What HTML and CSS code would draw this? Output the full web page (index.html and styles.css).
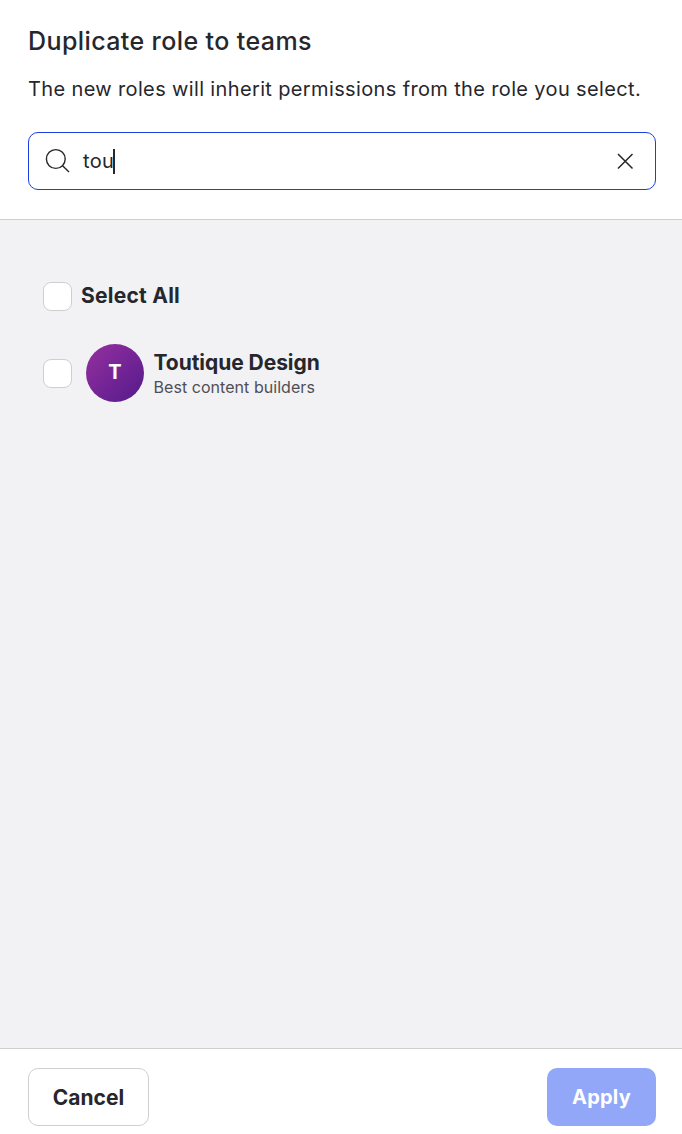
FILE: index.html
```html
<!DOCTYPE html>
<html lang="en">
<head>
<meta charset="utf-8">
<title>Duplicate role to teams</title>
<link rel="stylesheet" href="styles.css">
</head>
<body>
<div class="dialog">
  <header class="head">
    <h1 class="title">Duplicate role to teams</h1>
    <p class="desc">The new roles will inherit permissions from the role you select.</p>
    <div class="search">
      <svg class="icon-search" width="26" height="26" viewBox="0 0 26 26" fill="none" stroke="#26272c" stroke-width="1.4"><circle cx="10.8" cy="11" r="9.4"/><path d="M17.6 17.8 L24 24"/></svg>
      <span class="query">tou</span><span class="caret"></span>
      <svg class="icon-clear" width="18" height="18" viewBox="0 0 18 18" fill="none" stroke="#26272c" stroke-width="1.5"><path d="M2 2 L16.5 16.5 M16.5 2 L2 16.5"/></svg>
    </div>
  </header>
  <main class="list">
    <div class="row all">
      <span class="check"></span>
      <span class="all-label">Select All</span>
    </div>
    <div class="row team">
      <span class="check"></span>
      <span class="avatar">T</span>
      <div class="team-text">
        <div class="team-name">Toutique Design</div>
        <div class="team-sub">Best content builders</div>
      </div>
    </div>
  </main>
  <footer class="foot">
    <button class="btn cancel">Cancel</button>
    <button class="btn apply">Apply</button>
  </footer>
</div>
</body>
</html>
```
FILE: styles.css
```css
* { box-sizing: border-box; }
html, body { margin: 0; height: 100%; }
body { font-family: Inter, "Liberation Sans", sans-serif; color: #26272c; background: #fff; }
.dialog { display: flex; flex-direction: column; height: 1134px; }
.head { height: 220px; padding: 24px 26px 0 28px; border-bottom: 1px solid #cfcfd2; flex: none; }
.title { margin: 0; font-size: 25px; line-height: 34px; font-weight: 500; letter-spacing: 0.4px; }
.desc { margin: 16px 0 0; font-size: 20px; line-height: 30px; font-weight: 400; letter-spacing: 0.36px; white-space: nowrap; }
.search { margin-top: 28px; height: 58px; border: 1px solid #1a3ee0; border-radius: 10px; display: flex; align-items: center; padding: 0 21px 0 16px; }
.icon-search { flex: none; }
.query { margin-left: 12px; font-size: 20px; line-height: 30px; letter-spacing: 0.36px; }
.caret { width: 2px; height: 25px; background: #26272c; margin-left: -1px; }
.icon-clear { margin-left: auto; flex: none; }
.list { flex: 1; background: #f2f2f5; padding: 62px 0 0 43px; display: flex; flex-direction: column; gap: 33px; }
.row { display: flex; align-items: center; }
.check { width: 29px; height: 29px; flex: none; background: #fff; border: 1px solid #cfcfd2; border-radius: 8px; }
.all { height: 29px; gap: 9px; }
.all-label { font-size: 21px; font-weight: 700; letter-spacing: 0.25px; position: relative; top: -1px; }
.team { height: 58px; gap: 14px; }
.avatar { width: 58px; height: 58px; flex: none; padding-bottom: 2px; border-radius: 50%; background: linear-gradient(135deg, #96309f, #541a8c); color: #fff; font-size: 20px; font-weight: 700; display: flex; align-items: center; justify-content: center; }
.team-text { margin-left: -5px; padding-top: 1px; }
.team-name { font-size: 21px; line-height: 26px; font-weight: 700; letter-spacing: -0.05px; margin-left: 0.5px; }
.team-sub { font-size: 16px; line-height: 22px; color: #4e4f55; letter-spacing: 0.05px; margin-left: 0.5px; }
.foot { height: 86px; flex: none; border-top: 1px solid #cfcfd2; padding: 19px 26px 0 28px; display: flex; justify-content: space-between; align-items: flex-start; }
.btn { height: 58px; border-radius: 10px; font-family: inherit; font-weight: 700; padding: 0; }
.cancel { width: 121px; font-size: 21px; background: #fff; border: 1px solid #cfcfd2; color: #26272c; }
.apply { width: 109px; font-size: 20px; background: #92a7f8; border: 0; color: #fff; letter-spacing: 0.25px; }
```
